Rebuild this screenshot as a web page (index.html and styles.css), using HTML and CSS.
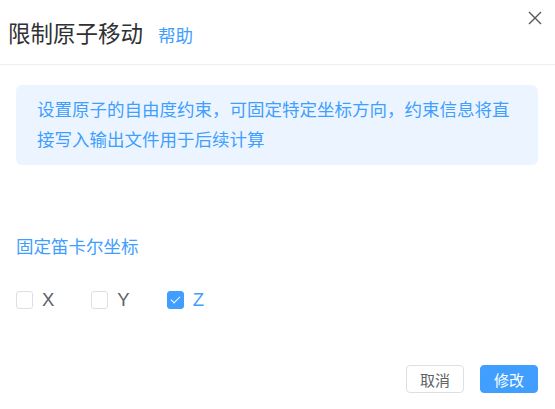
FILE: index.html
```html
<!DOCTYPE html>
<html lang="zh-CN">
<head>
  <meta charset="UTF-8" />
  <meta name="viewport" content="width=device-width, initial-scale=1.0" />
  <title>限制原子移动</title>
  <link rel="stylesheet" href="styles.css">
</head>
<body>
  <div class="dialog">
    <div class="dialog-header">
      <span class="dialog-title">限制原子移动</span>
      <a class="help-link" href="#">帮助</a>
      <button class="close-btn" aria-label="关闭">
        <svg width="14" height="14" viewBox="0 0 14 14">
          <path d="M1 1 L13 13 M13 1 L1 13" stroke="#555" stroke-width="1.4" fill="none" />
        </svg>
      </button>
    </div>

    <div class="dialog-body">
      <div class="alert">设置原子的自由度约束，可固定特定坐标方向，约束信息将直接写入输出文件用于后续计算</div>

      <div class="section-title">固定笛卡尔坐标</div>

      <div class="checkbox-group">
        <label class="checkbox">
          <span class="box"></span>
          <span class="label">X</span>
        </label>
        <label class="checkbox">
          <span class="box"></span>
          <span class="label">Y</span>
        </label>
        <label class="checkbox checked">
          <span class="box"></span>
          <span class="label">Z</span>
        </label>
      </div>
    </div>

    <div class="dialog-footer">
      <button class="btn">取消</button>
      <button class="btn btn-primary">修改</button>
    </div>
  </div>
</body>
</html>
```

FILE: styles.css
```css
* {
  box-sizing: border-box;
  margin: 0;
  padding: 0;
}

body {
  background: #fff;
  font-family: "Liberation Sans", "Noto Sans CJK SC", sans-serif;
  color: #606266;
}

.dialog {
  width: 555px;
  height: 409px;
}

.dialog-header {
  position: relative;
  display: flex;
  align-items: baseline;
  padding: 22px 8px 18px;
  border-bottom: 1px solid #eeeeee;
  height: 65px;
}

.dialog-title {
  font-size: 22.5px;
  line-height: 24px;
  color: #303133;
}

.help-link {
  margin-left: 15px;
  font-size: 17.5px;
  color: #409eff;
  text-decoration: none;
}

.close-btn {
  position: absolute;
  top: 11px;
  left: 528px;
  width: 14px;
  height: 14px;
  border: none;
  background: none;
  cursor: pointer;
  display: block;
}

.close-btn svg {
  display: block;
}

.dialog-body {
  padding: 20px 17px 0 16px;
}

.alert {
  background: #ecf5ff;
  color: #409eff;
  border-radius: 6px;
  padding: 10px 21px;
  font-size: 17.5px;
  line-height: 30px;
  height: 80px;
}

.section-title {
  margin-top: 70px;
  font-size: 17.5px;
  line-height: 24px;
  color: #409eff;
}

.checkbox-group {
  display: flex;
  margin-top: 29px;
}

.checkbox {
  display: flex;
  align-items: center;
  height: 24px;
  margin-right: 37px;
  cursor: pointer;
}

.checkbox .box {
  position: relative;
  width: 17px;
  height: 18px;
  border: 1px solid #dcdfe6;
  border-radius: 3px;
  background: #fff;
}

.checkbox .label {
  margin-left: 9px;
  font-size: 18.5px;
  color: #606266;
}

.checkbox.checked .box {
  background: #409eff;
  border-color: #409eff;
}

.checkbox.checked .box::after {
  content: "";
  position: absolute;
  left: 5px;
  top: 2px;
  width: 4px;
  height: 8px;
  border-right: 1.3px solid #fff;
  border-bottom: 1.3px solid #fff;
  transform: rotate(45deg);
}

.checkbox.checked .label {
  color: #409eff;
}

.dialog-footer {
  display: flex;
  justify-content: flex-end;
  gap: 16px;
  padding: 53px 17px 0 0;
}

.btn {
  height: 28px;
  padding: 0 13px;
  font-family: "Liberation Sans", "Noto Sans CJK SC", sans-serif;
  font-size: 15px;
  color: #606266;
  background: #fff;
  border: 1px solid #dcdfe6;
  border-radius: 4px;
  cursor: pointer;
}

.btn-primary {
  background: #409eff;
  border-color: #409eff;
  color: #fff;
}
```
